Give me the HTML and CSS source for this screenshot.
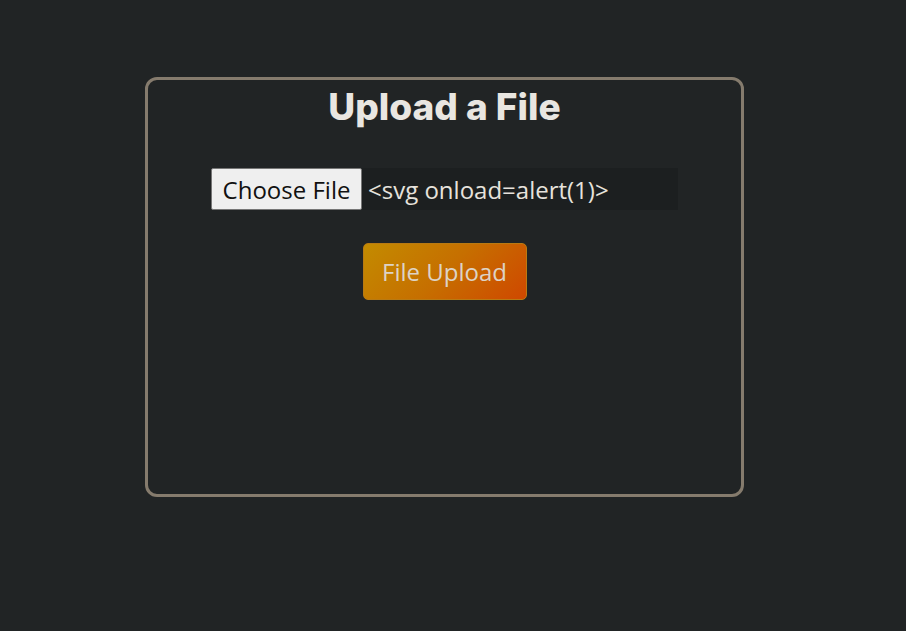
FILE: index.html
```html
<!DOCTYPE html>
<html lang="en">
<head>
<meta charset="utf-8">
<title>Upload a File</title>
<link rel="stylesheet" href="styles.css">
</head>
<body>
<main class="page">
  <section class="card">
    <h1 class="title">Upload a File</h1>
    <form class="upload-form">
      <div class="file-field">
        <span class="file-button">Choose File</span>
        <span class="file-name">&lt;svg onload=alert(1)&gt;</span>
      </div>
      <button type="button" class="submit">File Upload</button>
    </form>
  </section>
</main>
</body>
</html>
```
FILE: styles.css
```css
html, body {
  margin: 0;
  padding: 0;
  background: #212425;
  height: 100%;
}
body {
  font-family: "Open Sans", "Liberation Sans", sans-serif;
  color: #e6e2dc;
}
.page {
  display: flex;
  justify-content: center;
  padding-top: 77px;
}
.card {
  box-sizing: border-box;
  width: 599px;
  height: 420px;
  margin-left: -17px;
  border: 3px solid #857b6d;
  border-radius: 12px;
  display: flex;
  flex-direction: column;
  align-items: center;
}
.title {
  margin: 5px 0 0;
  font-family: "Inter", "Noto Sans", sans-serif;
  font-weight: 800;
  font-size: 37px;
  letter-spacing: 0;
  line-height: 44px;
  color: #e9e6e1;
}
.upload-form {
  display: flex;
  flex-direction: column;
  align-items: center;
  margin-top: 39px;
}
.file-field {
  display: flex;
  align-items: stretch;
  height: 42px;
  width: 467px;
  background: #1c1f20;
}
.file-button {
  box-sizing: border-box;
  display: flex;
  align-items: center;
  justify-content: center;
  width: 151px;
  background: #efefef;
  border: 1px solid #767676;
  border-radius: 2px;
  color: #111;
  font-size: 24px;
}
.file-name {
  display: flex;
  align-items: center;
  padding-left: 6px;
  font-size: 24px;
  color: #e6e2dc;
}
.submit {
  margin-top: 33px;
  width: 164px;
  height: 57px;
  border: 1px solid #b97a12;
  border-radius: 5px;
  background: linear-gradient(135deg, #c38b00 0%, #c66f00 50%, #cf4800 100%);
  color: #ddd3c6;
  font-family: "Open Sans", "Liberation Sans", sans-serif;
  font-size: 24px;
  padding: 0;
}
```
